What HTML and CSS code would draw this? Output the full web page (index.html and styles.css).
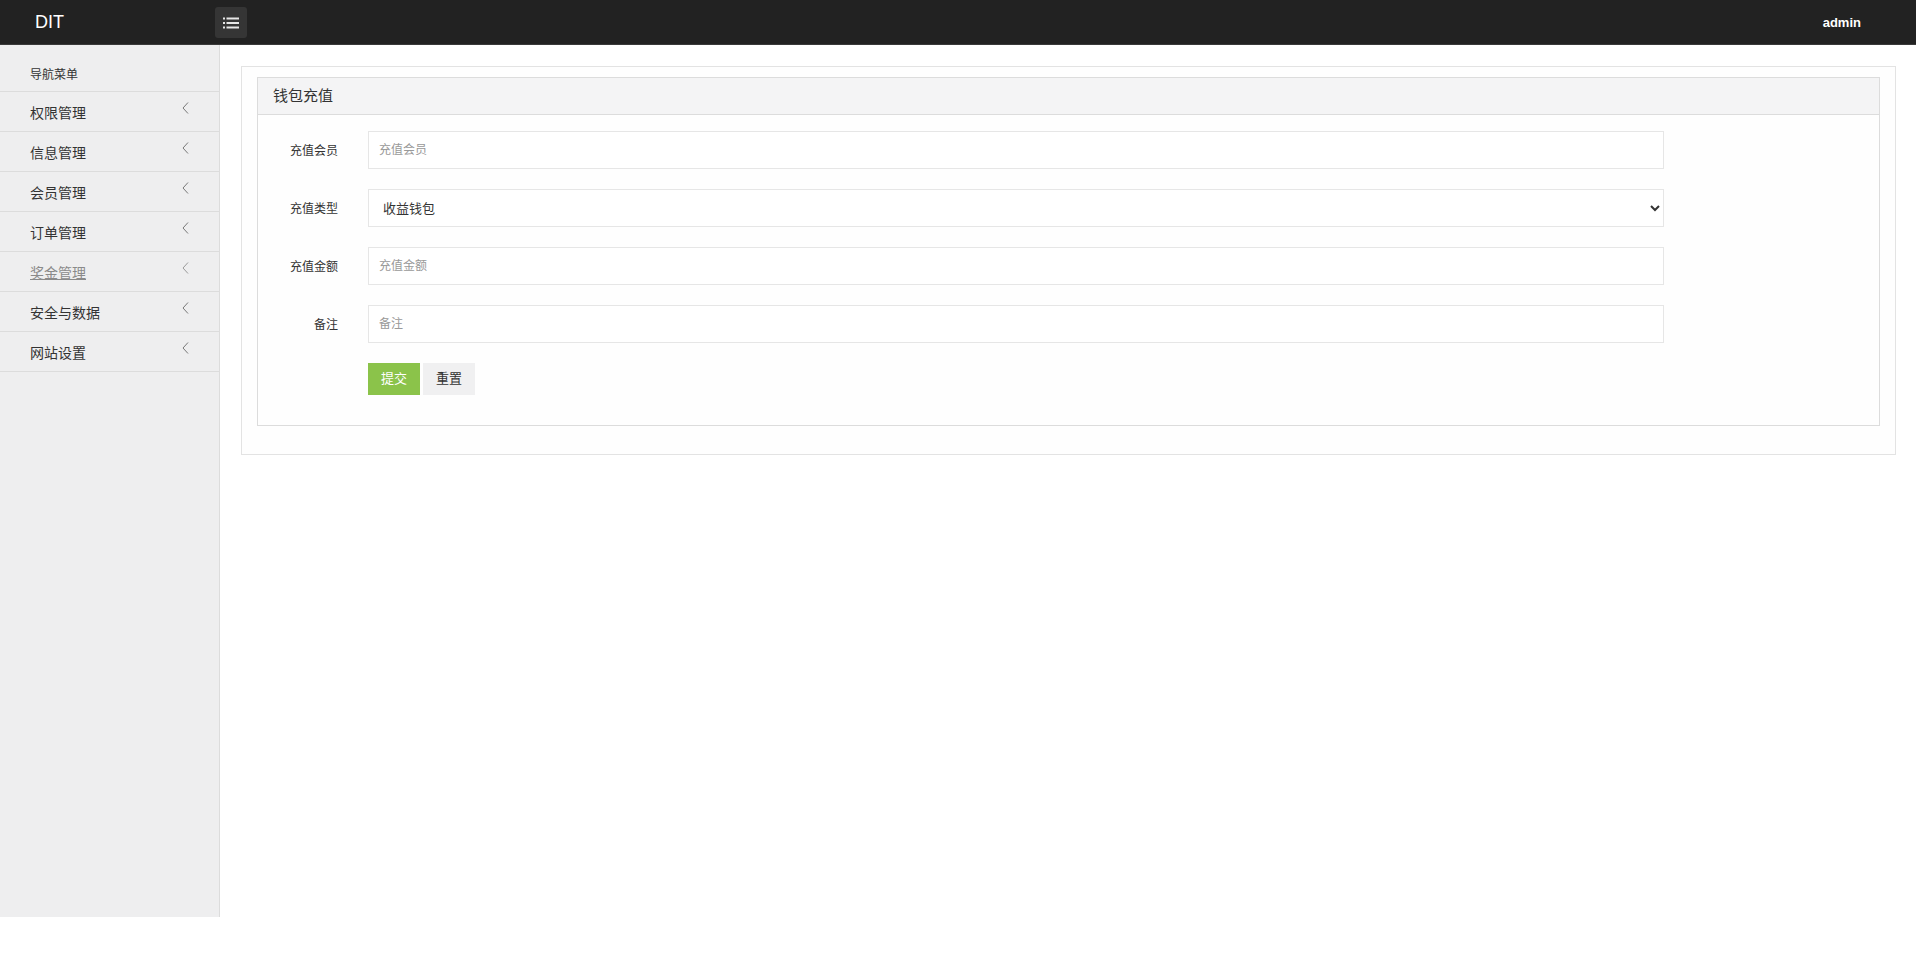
FILE: index.html
```html
<!DOCTYPE html>
<html lang="zh-CN">
<head>
<meta charset="utf-8">
<title>钱包充值</title>
<link rel="stylesheet" href="styles.css">
</head>
<body>
<header class="topbar">
  <div class="brand">DIT</div>
  <button class="toggle" type="button" aria-label="菜单">
    <svg width="16" height="12" viewBox="0 0 16 12"><g fill="#e6e6e6"><rect x="0" y="0.5" width="2" height="2"/><rect x="3.5" y="0.5" width="12.5" height="2"/><rect x="0" y="5" width="2" height="2"/><rect x="3.5" y="5" width="12.5" height="2"/><rect x="0" y="9.5" width="2" height="2"/><rect x="3.5" y="9.5" width="12.5" height="2"/></g></svg>
  </button>
  <div class="spacer"></div>
  <div class="user">admin</div>
</header>
<div class="layout">
  <aside class="sidebar">
    <div class="nav-title">导航菜单</div>
    <ul class="nav">
      <li class="nav-item"><span>权限管理</span><svg class="chev" width="7" height="12" viewBox="0 0 7 12"><polyline points="6,0.5 1,6 6,11.5" fill="none" stroke="#777" stroke-width="1"/></svg></li>
      <li class="nav-item"><span>信息管理</span><svg class="chev" width="7" height="12" viewBox="0 0 7 12"><polyline points="6,0.5 1,6 6,11.5" fill="none" stroke="#777" stroke-width="1"/></svg></li>
      <li class="nav-item"><span>会员管理</span><svg class="chev" width="7" height="12" viewBox="0 0 7 12"><polyline points="6,0.5 1,6 6,11.5" fill="none" stroke="#777" stroke-width="1"/></svg></li>
      <li class="nav-item"><span>订单管理</span><svg class="chev" width="7" height="12" viewBox="0 0 7 12"><polyline points="6,0.5 1,6 6,11.5" fill="none" stroke="#777" stroke-width="1"/></svg></li>
      <li class="nav-item hover"><span>奖金管理</span><svg class="chev" width="7" height="12" viewBox="0 0 7 12"><polyline points="6,0.5 1,6 6,11.5" fill="none" stroke="#999" stroke-width="1"/></svg></li>
      <li class="nav-item"><span>安全与数据</span><svg class="chev" width="7" height="12" viewBox="0 0 7 12"><polyline points="6,0.5 1,6 6,11.5" fill="none" stroke="#777" stroke-width="1"/></svg></li>
      <li class="nav-item"><span>网站设置</span><svg class="chev" width="7" height="12" viewBox="0 0 7 12"><polyline points="6,0.5 1,6 6,11.5" fill="none" stroke="#777" stroke-width="1"/></svg></li>
    </ul>
  </aside>
  <main class="main">
    <div class="outer">
      <div class="panel">
        <div class="panel-head">钱包充值</div>
        <form class="form">
          <label class="lbl">充值会员</label>
          <input class="ctl" type="text" placeholder="充值会员">
          <label class="lbl">充值类型</label>
          <select class="ctl sel"><option>收益钱包</option></select>
          <label class="lbl">充值金额</label>
          <input class="ctl" type="text" placeholder="充值金额">
          <label class="lbl">备注</label>
          <input class="ctl" type="text" placeholder="备注">
          <div class="lbl"></div>
          <div class="btns">
            <button class="btn primary" type="button">提交</button>
            <button class="btn plain" type="button">重置</button>
          </div>
        </form>
      </div>
    </div>
  </main>
</div>
</body>
</html>
```
FILE: styles.css
```css
* { box-sizing: border-box; }
html, body { margin: 0; padding: 0; }
body {
  font-family: "Liberation Sans", "Noto Sans CJK SC", sans-serif;
  color: #333;
  background: #fff;
  width: 1916px;
}
.topbar {
  height: 45px;
  background: #222;
  border-bottom: 1px solid #3a3a3a;
  display: flex;
  align-items: center;
}
.brand {
  width: 215px;
  padding-left: 35px;
  color: #fff;
  font-size: 18px;
}
.toggle {
  width: 32px;
  height: 31px;
  margin-top: 1px;
  background: #353535;
  border: 0;
  border-radius: 3px;
  padding: 0;
  display: flex;
  align-items: center;
  justify-content: center;
}
.spacer { flex: 1; }
.user {
  color: #fff;
  font-size: 13px;
  font-weight: bold;
  padding-right: 55px;
}
.layout { display: flex; align-items: flex-start; }
.sidebar {
  width: 220px;
  height: 872px;
  background: #eeeeef;
  border-right: 1px solid #dcdcdc;
  flex: none;
}
.nav-title {
  height: 47px;
  padding: 20px 0 0 30px;
  font-size: 12px;
  color: #333;
  border-bottom: 1px solid #dcdcdc;
}
.nav { list-style: none; margin: 0; padding: 0; }
.nav-item {
  height: 40px;
  border-bottom: 1px solid #dcdcdc;
  display: flex;
  align-items: center;
  justify-content: space-between;
  padding: 0 30px 0 30px;
  font-size: 14px;
  color: #333;
}
.nav-item .chev { margin-top: -7px; }
.nav-item.hover span { color: #8a8a8a; text-decoration: underline; }
.main {
  flex: 1;
  padding: 21px 20px 0 21px;
}
.outer {
  border: 1px solid #e3e3e3;
  background: #fefefe;
  padding: 10px 15px 28px 15px;
}
.panel {
  border: 1px solid #dcdcdc;
  background: #fefefe;
}
.panel-head {
  height: 37px;
  background: #f4f4f5;
  border-bottom: 1px solid #dcdcdc;
  padding-left: 15px;
  font-size: 15px;
  line-height: 35px;
  color: #333;
}
.form {
  display: grid;
  grid-template-columns: 80px 1296px;
  column-gap: 30px;
  row-gap: 20px;
  align-items: center;
  padding: 16px 0 30px 0;
}
.lbl {
  text-align: right;
  font-size: 12px;
  color: #333;
  padding-bottom: 2px;
}
.ctl {
  height: 38px;
  border: 1px solid #e6e6e6;
  background: #fff;
  padding: 0 10px;
  font-family: "Liberation Sans", "Noto Sans CJK SC", sans-serif;
  font-size: 12px;
  color: #333;
  outline: none;
  border-radius: 0;
}
.ctl::placeholder { color: #999; }
.sel { font-size: 13px; padding-left: 10px; }
.btns { display: flex; gap: 3px; }
.btn {
  height: 32px;
  width: 52px;
  border: 0;
  border-radius: 0;
  font-family: "Noto Sans CJK SC", sans-serif;
  font-size: 13px;
  line-height: 28px;
  padding: 0 0 3px 0;
}
.btn.primary { background: #8bc34a; color: #fff; }
.btn.plain { background: #f0f0f1; color: #333; }
```
